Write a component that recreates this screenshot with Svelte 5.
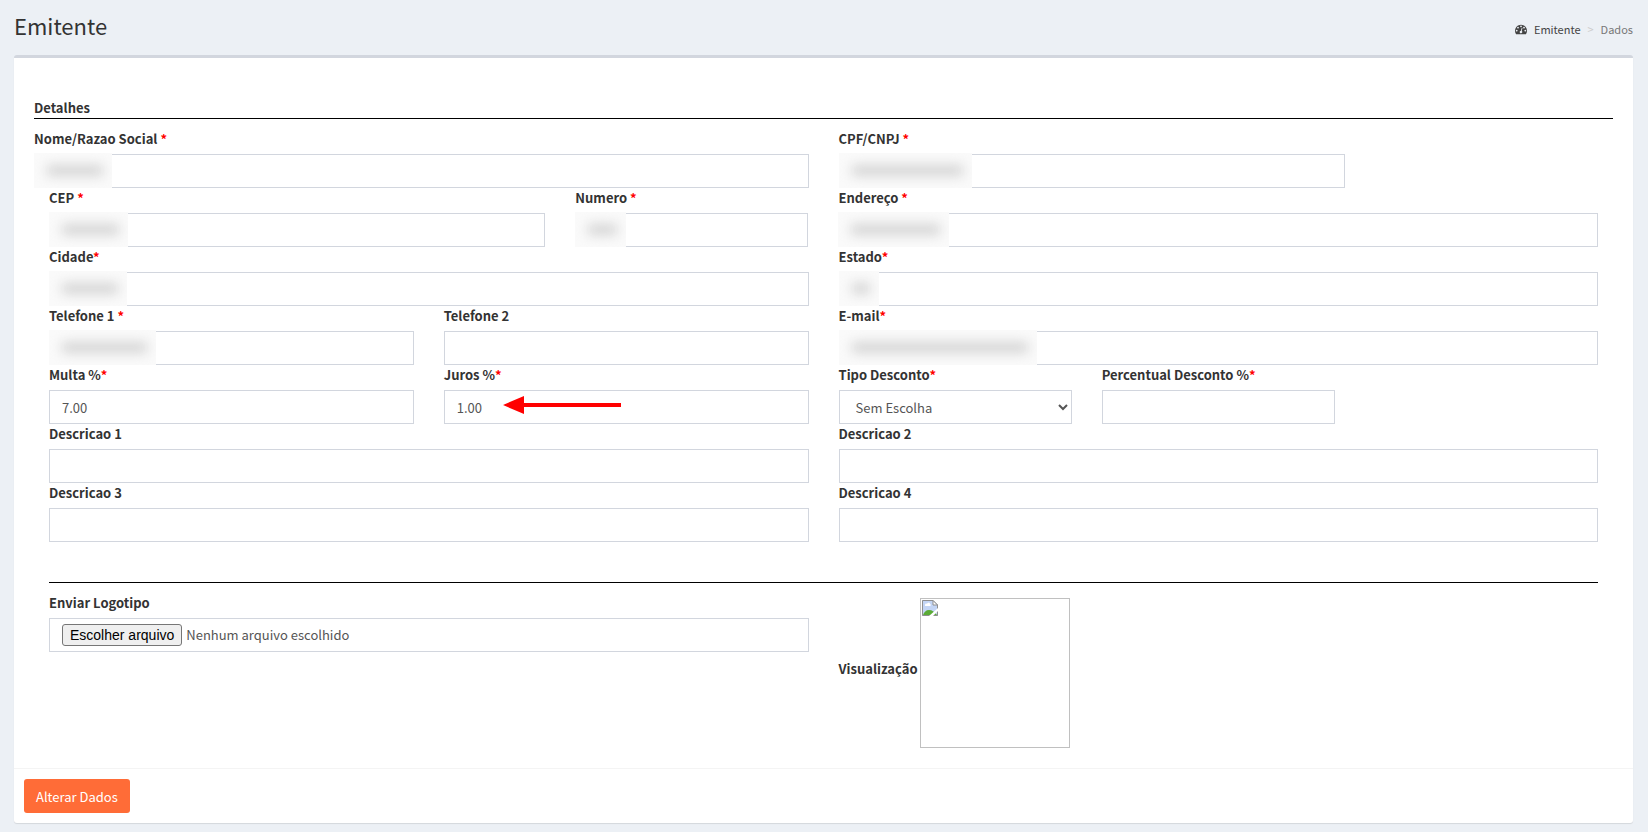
<script lang="ts">
  type Field = {
    id: string;
    label: string;
    span: number;
    required?: boolean;
    spaced?: boolean;
    value?: string;
    options?: string[];
    mask?: number;
    arrow?: boolean;
  };

  // span is counted in twelfths of the form width
  const rows: Field[][] = [
    [
      { id: 'cep', label: 'CEP', span: 4, required: true, spaced: true, mask: 79 },
      { id: 'numero', label: 'Numero', span: 2, required: true, spaced: true, mask: 51 },
      { id: 'endereco', label: 'Endereço', span: 6, required: true, spaced: true, mask: 111 },
    ],
    [
      { id: 'cidade', label: 'Cidade', span: 6, required: true, mask: 78 },
      { id: 'estado', label: 'Estado', span: 6, required: true, mask: 40 },
    ],
    [
      { id: 'telefone1', label: 'Telefone 1', span: 3, required: true, spaced: true, mask: 107 },
      { id: 'telefone2', label: 'Telefone 2', span: 3 },
      { id: 'email', label: 'E-mail', span: 6, required: true, mask: 198 },
    ],
    [
      { id: 'multa', label: 'Multa %', span: 3, required: true, value: '7.00' },
      { id: 'juros', label: 'Juros %', span: 3, required: true, value: '1.00', arrow: true },
      { id: 'tipo', label: 'Tipo Desconto', span: 2, required: true, options: ['Sem Escolha', 'Percentual', 'Valor'] },
      { id: 'percentual', label: 'Percentual Desconto %', span: 2, required: true },
    ],
    [
      { id: 'descricao1', label: 'Descricao 1', span: 6 },
      { id: 'descricao2', label: 'Descricao 2', span: 6 },
    ],
    [
      { id: 'descricao3', label: 'Descricao 3', span: 6 },
      { id: 'descricao4', label: 'Descricao 4', span: 6 },
    ],
  ];

  let fileInput: HTMLInputElement;
  let fileName = 'Nenhum arquivo escolhido';

  function pickFile() {
    fileInput.click();
  }

  function onFile() {
    fileName = fileInput.files?.[0]?.name ?? 'Nenhum arquivo escolhido';
  }
</script>

<div class="page">
  <header class="content-header">
    <h1>Emitente</h1>
    <nav class="breadcrumb" aria-label="Navegação">
      <a href="#emitente">
        <svg viewBox="0 0 1792 1792" aria-hidden="true">
          <path d="M384 1152q0-53-37.5-90.5t-90.5-37.5-90.5 37.5-37.5 90.5 37.5 90.5 90.5 37.5 90.5-37.5 37.5-90.5zm192-448q0-53-37.5-90.5t-90.5-37.5-90.5 37.5-37.5 90.5 37.5 90.5 90.5 37.5 90.5-37.5 37.5-90.5zm428 481l101-382q6-26-7.5-48.5t-38.5-29.5-48 6.5-30 39.5l-101 382q-60 5-107 43.5t-63 98.5q-20 77 20 146t117 89 146-20 89-117q16-60-6-117t-72-91zm660-33q0-53-37.5-90.5t-90.5-37.5-90.5 37.5-37.5 90.5 37.5 90.5 90.5 37.5 90.5-37.5 37.5-90.5zm-640-640q0-53-37.5-90.5t-90.5-37.5-90.5 37.5-37.5 90.5 37.5 90.5 90.5 37.5 90.5-37.5 37.5-90.5zm448 192q0-53-37.5-90.5t-90.5-37.5-90.5 37.5-37.5 90.5 37.5 90.5 90.5 37.5 90.5-37.5 37.5-90.5zm320 448q0 261-141 483-19 29-54 29h-1402q-35 0-54-29-141-221-141-483 0-182 71-348t191-286 286-191 348-71 348 71 286 191 191 286 71 348z" />
        </svg>
        Emitente
      </a>
      <span class="sep">&gt;</span>
      <span class="current">Dados</span>
    </nav>
  </header>

  <form class="box" on:submit|preventDefault>
    <div class="box-body">
      <h2>Detalhes</h2>

      <div class="row first">
        <div class="field nome">
          <label for="nome">Nome/Razao Social <span class="required">*</span></label>
          <div class="control">
            <input id="nome" type="text" />
            <span class="mask" style="width: 78px"></span>
          </div>
        </div>
        <div class="field cpf">
          <label for="cpf">CPF/CNPJ <span class="required">*</span></label>
          <div class="control">
            <input id="cpf" type="text" />
            <span class="mask" style="width: 133px"></span>
          </div>
        </div>
      </div>

      {#each rows as row}
        <div class="row">
          {#each row as f (f.id)}
            <div class="field" style="grid-column: span {f.span}">
              <label for={f.id}
                >{f.label}{#if f.spaced}{' '}{/if}{#if f.required}<span class="required">*</span>{/if}</label
              >
              <div class="control">
                {#if f.options}
                  <select id={f.id}>
                    {#each f.options as o}
                      <option>{o}</option>
                    {/each}
                  </select>
                {:else}
                  <input id={f.id} type="text" value={f.value ?? ''} />
                {/if}
                {#if f.mask}
                  <span class="mask" style="width: {f.mask}px"></span>
                {/if}
                {#if f.arrow}
                  <svg class="arrow" viewBox="0 0 118 18" aria-hidden="true">
                    <path d="M0 9 21 0v7h97v4H21v7z" />
                  </svg>
                {/if}
              </div>
            </div>
          {/each}
        </div>
      {/each}

      <hr />

      <div class="row">
        <div class="field half">
          <label for="logo">Enviar Logotipo</label>
          <div class="control file">
            <input id="logo" class="hidden-file" type="file" bind:this={fileInput} on:change={onFile} />
            <button type="button" on:click={pickFile}>Escolher arquivo</button>
            <span>{fileName}</span>
          </div>
        </div>
        <div class="field half preview">
          <span class="caption">Visualização</span>
          <div class="thumb" role="img" aria-label="Visualização">
            <svg viewBox="0 0 16 16" aria-hidden="true">
              <path d="M0 0h11l5 5v11H0z" fill="#c3d5f5" />
              <path d="M1 15c1-3 3-5 6-5s6 2 8 5z" fill="#5bab36" />
              <path d="M3 5c0-1 1-2 2-1 1-2 3-1 3 0 1 0 1 2 0 2H4C3 6 3 6 3 5z" fill="#fff" />
              <path d="M.5 15.500V.5H11L15.500 5v10.500z" fill="none" stroke="#8f8f8f" />
              <path d="M11 .5V5h4.500z" fill="#fff" stroke="#8f8f8f" />
              <path d="M7 16 16 8v3l-5 5z" fill="#fff" />
            </svg>
          </div>
        </div>
      </div>
    </div>

    <div class="box-footer">
      <button type="submit" class="btn">Alterar Dados</button>
    </div>
  </form>
</div>

<style>
  :global(body) {
    background: #ecf0f5;
  }

  .page {
    padding: 0 15px 8px 14px;
    font-family: 'Noto Sans CJK SC', 'Noto Sans CJK JP', 'Open Sans', sans-serif;
    font-size: 13px;
    line-height: 20px;
    color: #333;
  }

  .page * {
    box-sizing: border-box;
  }

  .content-header {
    display: flex;
    justify-content: space-between;
    align-items: center;
    height: 55px;
  }

  h1 {
    margin: 0;
    padding-bottom: 5px;
    font-size: 22px;
    font-weight: 400;
    line-height: 24px;
  }

  .breadcrumb {
    display: flex;
    gap: 7px;
    padding-top: 2px;
    font-size: 11px;
  }

  .breadcrumb a {
    display: flex;
    align-items: center;
    gap: 7px;
    color: #444;
    text-decoration: none;
  }

  .breadcrumb svg {
    width: 12px;
    height: 12px;
    fill: #444;
  }

  .sep { color: #ccc; }
  .current { color: #777; }

  .box {
    background: #fff;
    border-top: 3px solid #d2d6de;
    border-radius: 3px;
    box-shadow: 0 1px 1px rgba(0, 0, 0, 0.1);
  }

  .box-body {
    padding: 40px 20px 20px;
  }

  h2 {
    margin: 0 0 10px;
    border-bottom: 1px solid #000;
    font-size: 13px;
    font-weight: 700;
    line-height: 20px;
  }

  .row {
    display: grid;
    grid-template-columns: repeat(12, minmax(0, 1fr));
  }

  .field {
    padding: 0 15px;
  }

  .first {
    display: flex;
  }

  .nome {
    flex: 0 0 50%;
    padding-left: 0;
  }

  .cpf {
    flex: 0 0 34%;
  }

  .half {
    grid-column: span 6;
  }

  label {
    display: block;
    margin-bottom: 5px;
    font-weight: 700;
  }

  .required {
    color: red;
  }

  .control {
    position: relative;
  }

  .control input[type='text'],
  select,
  .file {
    display: block;
    width: 100%;
    height: 34px;
    padding: 6px 12px;
    border: 1px solid #d2d6de;
    border-radius: 0;
    background: #fff;
    color: #555;
    font-family: inherit;
    font-size: 13px;
  }

  .mask {
    position: absolute;
    top: -1px;
    left: 0;
    height: 35px;
    overflow: hidden;
    background: #fafafa;
  }

  .mask::before {
    content: '';
    position: absolute;
    inset: 12px 9px 12px 13px;
    background: #d4d4d4;
    filter: blur(6px);
  }

  .arrow {
    position: absolute;
    top: 6px;
    left: 59px;
    width: 118px;
    height: 18px;
    fill: red;
  }

  hr {
    margin: 40px 15px 10px;
    border: 0;
    border-top: 1px solid #000;
  }

  .control.file {
    display: flex;
    align-items: center;
    gap: 4px;
  }

  .hidden-file {
    position: absolute;
    width: 1px;
    height: 1px;
    opacity: 0;
    pointer-events: none;
  }

  .file button {
    height: 22px;
    padding: 0 7px;
    border: 1px solid #767676;
    border-radius: 3px;
    background: #efefef;
    color: #000;
    font-family: 'Liberation Sans', Arial, sans-serif;
    font-size: 14px;
  }

  .preview {
    display: flex;
    align-items: center;
    gap: 2px;
    padding-top: 5px;
  }

  .caption {
    padding-bottom: 8px;
    font-weight: 700;
  }

  .thumb {
    width: 150px;
    height: 150px;
    padding: 1px;
    border: 1px solid silver;
  }

  .thumb svg {
    display: block;
    width: 16px;
    height: 16px;
  }

  .box-footer {
    padding: 10px;
    border-top: 1px solid #f4f4f4;
  }

  .btn {
    height: 34px;
    padding: 0 12px;
    border: 0;
    border-radius: 3px;
    background: #ff6c37;
    color: #fff;
    font-family: inherit;
    font-size: 13px;
  }
</style>
